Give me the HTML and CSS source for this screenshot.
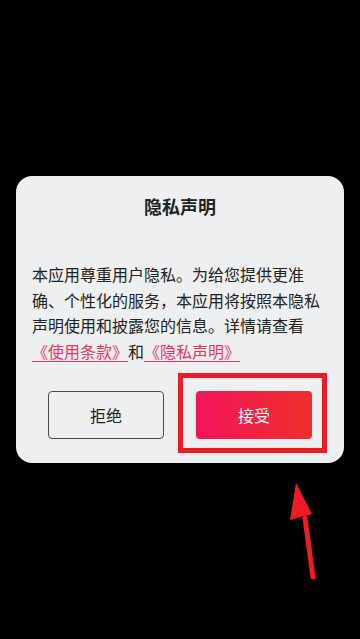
FILE: index.html
```html
<!DOCTYPE html>
<html lang="zh-CN">
<head>
<meta charset="utf-8">
<link rel="stylesheet" href="styles.css">
</head>
<body>
<div class="screen">
  <div class="dialog">
    <div class="title">隐私声明</div>
    <p class="body">本应用尊重用户隐私。为给您提供更准确、个性化的服务，本应用将按照本隐私声明使用和披露您的信息。详情请查看<a class="link">《使用条款》</a>和<a class="link">《隐私声明》</a></p>
    <div class="actions">
      <button class="btn btn-reject">拒绝</button>
      <div class="accept-wrap">
        <button class="btn btn-accept">接受</button>
        <div class="highlight"></div>
      </div>
    </div>
  </div>
  <svg class="arrow" width="40" height="110" viewBox="0 0 40 110">
    <line x1="34" y1="97" x2="26" y2="38" stroke="#ee1c25" stroke-width="5" stroke-linecap="round"/>
    <polygon points="17,3 11,40 33,34" fill="#ee1c25"/>
  </svg>
</div>
</body>
</html>
```
FILE: styles.css
```css
html, body {
  margin: 0;
  padding: 0;
  background: #000;
}
.screen {
  position: relative;
  width: 360px;
  height: 639px;
  display: flex;
  align-items: center;
  justify-content: center;
  font-family: "Noto Sans CJK SC", "Noto Sans", sans-serif;
}
.dialog {
  width: 328px;
  box-sizing: border-box;
  background: #eeeff1;
  border-radius: 16px;
  padding: 18px 16px 24px;
}
.title {
  text-align: center;
  font-size: 18px;
  line-height: 24px;
  font-weight: 700;
  color: #222;
}
.body {
  margin: 44px 0 0;
  font-size: 16px;
  line-height: 25.5px;
  color: #222;
  line-break: strict;
}
.link {
  color: #e8375f;
  text-decoration: underline;
  text-decoration-thickness: 1px;
  text-underline-offset: 3px;
}
.actions {
  margin-top: 27px;
  display: flex;
  justify-content: center;
  gap: 32px;
}
.btn {
  width: 116px;
  height: 48px;
  box-sizing: border-box;
  border-radius: 4px;
  font-family: inherit;
  font-size: 16px;
  padding: 0;
}
.btn-reject {
  background: transparent;
  border: 1.5px solid #4a4a4a;
  color: #222;
}
.accept-wrap {
  position: relative;
}
.btn-accept {
  display: block;
  border: none;
  color: #fff;
  background: linear-gradient(90deg, #f1155a 0%, #f02f2c 100%);
}
.highlight {
  position: absolute;
  left: -18px;
  top: -18px;
  right: -15px;
  bottom: -14px;
  border: 5px solid #ed1c24;
  box-shadow: inset 0 0 0 1px #fbe9ea;
  box-sizing: border-box;
}
.arrow {
  position: absolute;
  left: 279px;
  top: 480px;
}
```
